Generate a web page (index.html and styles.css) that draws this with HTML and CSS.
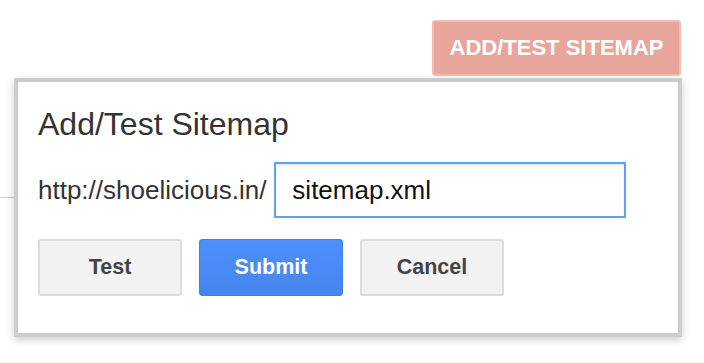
FILE: index.html
```html
<!DOCTYPE html>
<html lang="en">

<head>
    <meta charset="UTF-8">
    <meta name="viewport" content="width=device-width, initial-scale=1.0">
    <title>Add/Test Sitemap</title>
    <link rel="stylesheet" href="styles.css">
</head>

<body>
    <div class="page">
        <div class="page-rule"></div>
        <div class="toolbar">
            <button class="add-btn">ADD/TEST SITEMAP</button>
        </div>
        <div class="dialog">
            <h2>Add/Test Sitemap</h2>
            <div class="sitemap-row">
                <span class="site-url">http://shoelicious.in/</span>
                <input class="sitemap-input" type="text" value="sitemap.xml">
            </div>
            <div class="dialog-actions">
                <button class="btn">Test</button>
                <button class="btn btn-primary">Submit</button>
                <button class="btn">Cancel</button>
            </div>
        </div>
    </div>
</body>

</html>
```

FILE: styles.css
```css
body {
    margin: 0;
    background: #fff;
    font-family: "Liberation Sans", Arial, sans-serif;
    color: #333;
}

.page {
    position: relative;
    width: 704px;
    height: 363px;
    overflow: hidden;
}

/* page content peeking out behind the dialog */
.page-rule {
    position: absolute;
    top: 197px;
    left: 0;
    width: 30px;
    height: 1px;
    background: #cccccc;
}

.toolbar {
    display: flex;
    justify-content: flex-end;
    padding: 20px 23px 0 0;
}

.add-btn {
    width: 249px;
    height: 56px;
    border: 2px solid #f3bdb5;
    border-radius: 3px;
    background: #e8a59c;
    color: #fff;
    font-family: inherit;
    font-size: 22px;
    font-weight: 700;
    padding: 0;
}

.dialog {
    position: relative;
    margin: 2px 0 0 14px;
    width: 640px;
    padding: 24px 0 37px 20px;
    border: 4px solid #cccccc;
    background: #fff;
    box-shadow: 0 3px 8px rgba(0, 0, 0, 0.2);
}

.dialog h2 {
    margin: 0;
    font-size: 32px;
    line-height: 36px;
    font-weight: 400;
    color: #333;
}

.sitemap-row {
    display: flex;
    align-items: center;
    gap: 8px;
    margin-top: 20px;
}

.site-url {
    font-size: 26px;
    color: #333;
}

.sitemap-input {
    width: 352px;
    height: 56px;
    box-sizing: border-box;
    padding: 0 16px;
    border: 2px solid #629df6;
    border-radius: 1px;
    box-shadow: inset 0 1px 2px rgba(0, 0, 0, 0.12);
    font-family: inherit;
    font-size: 26px;
    color: #111;
    outline: none;
}

.dialog-actions {
    display: flex;
    gap: 17px;
    margin-top: 21px;
}

.btn {
    width: 144px;
    height: 57px;
    border: 2px solid #dcdcdc;
    border-radius: 3px;
    background: #f2f2f2;
    color: #444;
    font-family: inherit;
    font-size: 21.5px;
    font-weight: 700;
    padding: 0;
}

.btn-primary {
    border: 1px solid #3a80ee;
    background: linear-gradient(to bottom, #4d8ffd, #4685ec);
    color: #fff;
}
```
